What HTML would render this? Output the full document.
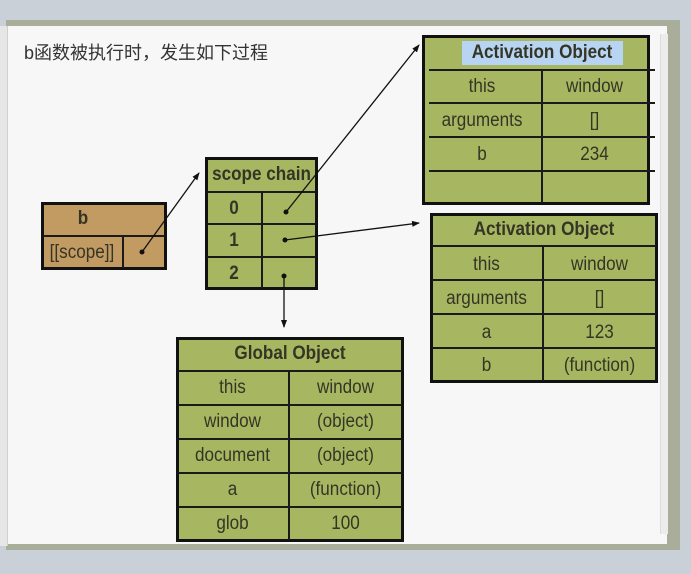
<!DOCTYPE html>
<html><head><meta charset="utf-8"><style>
*{margin:0;padding:0;box-sizing:border-box}
body{width:691px;height:574px;position:relative;overflow:hidden;background:#c9d0d8;font-family:"Liberation Sans",sans-serif}
.a{position:absolute}
.box{position:absolute;border:3px solid #111;background:#a7b661}
.hl{position:absolute;height:2px;background:#1a1a1a}
.vl{position:absolute;width:2px;background:#1a1a1a}
.t{position:absolute;text-align:center;color:#353525;font-size:19px;line-height:1;transform:scaleX(0.9);white-space:nowrap}
.b{font-weight:bold;font-size:19px}
</style></head><body>
<div class="a" style="left:6px;top:20px;width:674px;height:530px;background:#a9ae9a"></div>
<div class="a" style="left:0;top:26px;width:667px;height:518px;background:#f7f7f7;border-radius:0 0 0 6px"></div>
<div class="a" style="left:0;top:26px;width:8px;height:520px;background:#e6e6e6;border-right:1px solid #d0d0d0"></div>
<div class="a" style="left:660px;top:34px;width:8px;height:500px;background:#ececec;border-left:1px solid #dcdcdc"></div>
<div class="a" style="left:24px;top:39px;font-size:18px;color:#333;font-family:'Liberation Sans','Noto Sans CJK SC',sans-serif">b函数被执行时，发生如下过程</div>

<div class="box" style="left:41px;top:202px;width:126px;height:68px;background:#c29b63"></div>
<div class="hl" style="left:43px;top:235px;width:122px"></div>
<div class="vl" style="left:122px;top:236px;height:32px"></div>
<div class="t b" style="top:209px;left:41px;width:84px">b</div>
<div class="t" style="left:41px;top:243px;width:82px">[[scope]]</div>

<div class="box" style="left:205px;top:157px;width:113px;height:133px"></div>
<div class="hl" style="left:207px;top:191px;width:109px"></div>
<div class="hl" style="left:207px;top:223px;width:109px"></div>
<div class="hl" style="left:207px;top:256px;width:109px"></div>
<div class="vl" style="left:261px;top:192px;height:96px"></div>
<div class="t b" style="left:205px;top:165px;width:113px">scope chain</div>
<div class="t b" style="left:207px;top:199px;width:54px">0</div>
<div class="t b" style="left:207px;top:231px;width:54px">1</div>
<div class="t b" style="left:207px;top:264px;width:54px">2</div>

<div class="box" style="left:422px;top:35px;width:228px;height:170px"></div>
<div class="hl" style="left:429px;top:69px;width:226px"></div>
<div class="hl" style="left:429px;top:102px;width:226px"></div>
<div class="hl" style="left:429px;top:136px;width:226px"></div>
<div class="hl" style="left:429px;top:170px;width:226px"></div>
<div class="vl" style="left:541px;top:70px;height:133px"></div>
<div class="a" style="left:462px;top:41px;width:161px;height:24px;background:#b7d4f2"></div>
<div class="t b" style="left:422px;top:43px;width:240px">Activation Object</div>
<div class="t" style="left:422px;top:77px;width:120px">this</div>
<div class="t" style="left:542px;top:77px;width:105px">window</div>
<div class="t" style="left:422px;top:111px;width:120px">arguments</div>
<div class="t" style="left:542px;top:111px;width:105px">[]</div>
<div class="t" style="left:422px;top:145px;width:120px">b</div>
<div class="t" style="left:542px;top:145px;width:105px">234</div>

<div class="box" style="left:430px;top:213px;width:228px;height:170px"></div>
<div class="hl" style="left:432px;top:245px;width:224px"></div>
<div class="hl" style="left:432px;top:279px;width:224px"></div>
<div class="hl" style="left:432px;top:313px;width:224px"></div>
<div class="hl" style="left:432px;top:347px;width:224px"></div>
<div class="vl" style="left:542px;top:246px;height:135px"></div>
<div class="t b" style="left:430px;top:220px;width:228px">Activation Object</div>
<div class="t" style="left:430px;top:255px;width:113px">this</div>
<div class="t" style="left:543px;top:255px;width:113px">window</div>
<div class="t" style="left:430px;top:289px;width:113px">arguments</div>
<div class="t" style="left:543px;top:289px;width:113px">[]</div>
<div class="t" style="left:430px;top:323px;width:113px">a</div>
<div class="t" style="left:543px;top:323px;width:113px">123</div>
<div class="t" style="left:430px;top:356px;width:113px">b</div>
<div class="t" style="left:543px;top:356px;width:113px">(function)</div>

<div class="box" style="left:176px;top:337px;width:228px;height:205px"></div>
<div class="hl" style="left:178px;top:370px;width:224px"></div>
<div class="hl" style="left:178px;top:404px;width:224px"></div>
<div class="hl" style="left:178px;top:438px;width:224px"></div>
<div class="hl" style="left:178px;top:472px;width:224px"></div>
<div class="hl" style="left:178px;top:506px;width:224px"></div>
<div class="vl" style="left:288px;top:371px;height:169px"></div>
<div class="t b" style="left:176px;top:344px;width:228px">Global Object</div>
<div class="t" style="left:176px;top:378px;width:113px">this</div>
<div class="t" style="left:289px;top:378px;width:113px">window</div>
<div class="t" style="left:176px;top:412px;width:113px">window</div>
<div class="t" style="left:289px;top:412px;width:113px">(object)</div>
<div class="t" style="left:176px;top:446px;width:113px">document</div>
<div class="t" style="left:289px;top:446px;width:113px">(object)</div>
<div class="t" style="left:176px;top:480px;width:113px">a</div>
<div class="t" style="left:289px;top:480px;width:113px">(function)</div>
<div class="t" style="left:176px;top:514px;width:113px">glob</div>
<div class="t" style="left:289px;top:514px;width:113px">100</div>

<svg class="a" style="left:0;top:0" width="691" height="574">
<defs><marker id="m" markerWidth="8" markerHeight="8" refX="7" refY="4" orient="auto" markerUnits="userSpaceOnUse"><path d="M0,1 L8,4 L0,7 Z" fill="#111"/></marker></defs>
<g stroke="#111" stroke-width="1.3" fill="none">
<line x1="142" y1="252" x2="199" y2="173" marker-end="url(#m)"/>
<line x1="286" y1="212" x2="419" y2="45" marker-end="url(#m)"/>
<line x1="285" y1="240" x2="419" y2="223" marker-end="url(#m)"/>
<line x1="284" y1="276" x2="284" y2="327" marker-end="url(#m)"/>
</g>
<g fill="#111"><circle cx="142" cy="252" r="2.5"/><circle cx="286" cy="212" r="2.5"/><circle cx="285" cy="240" r="2.5"/><circle cx="284" cy="276" r="2.5"/></g>
</svg>
</body></html>
